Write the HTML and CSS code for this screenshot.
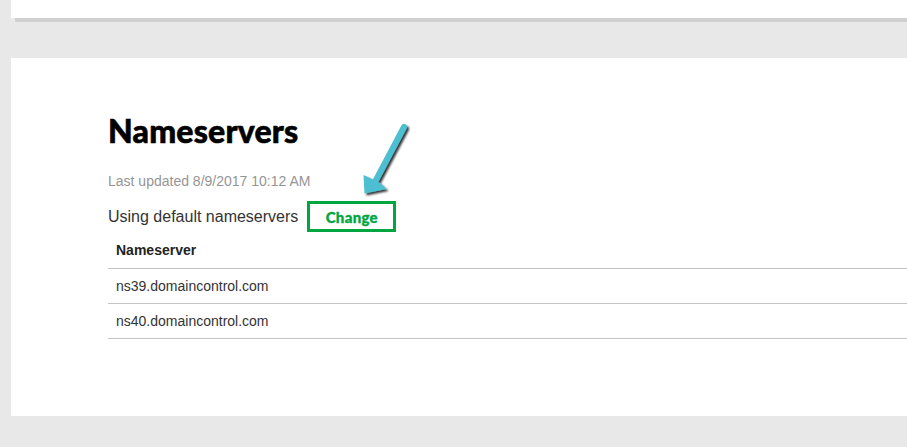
FILE: index.html
```html
<!DOCTYPE html>
<html>
<head>
<meta charset="utf-8">
<link rel="stylesheet" href="styles.css">
</head>
<body>
<div class="page">
  <div class="card card-top"></div>
  <div class="card card-main">
    <h1 class="title">Nameservers</h1>
    <p class="updated">Last updated 8/9/2017 10:12 AM</p>
    <div class="status-row">
      <span class="status">Using default nameservers</span>
      <button class="change-btn">Change</button>
    </div>
    <table class="ns-table">
      <thead>
        <tr><th>Nameserver</th></tr>
      </thead>
      <tbody>
        <tr><td>ns39.domaincontrol.com</td></tr>
        <tr><td>ns40.domaincontrol.com</td></tr>
      </tbody>
    </table>
  </div>
</div>
<svg class="arrow" width="60" height="90" viewBox="355 115 60 90" xmlns="http://www.w3.org/2000/svg">
  <defs>
    <filter id="sh" x="-50%" y="-50%" width="200%" height="200%">
      <feGaussianBlur in="SourceAlpha" stdDeviation="1.2"/>
      <feOffset dx="2" dy="2" result="b"/>
      <feComponentTransfer><feFuncA type="linear" slope="0.8"/></feComponentTransfer>
      <feMerge><feMergeNode/><feMergeNode in="SourceGraphic"/></feMerge>
    </filter>
  </defs>
  <g filter="url(#sh)" fill="#4dbfd3">
    <path d="M404 127 L376 180" stroke="#4dbfd3" stroke-width="6" stroke-linecap="round" fill="none"/>
    <path d="M364.5 193.5 L363.5 175 L370 178 L380 183 L386.5 189 Z"/>
  </g>
</svg>
</body>
</html>
```

FILE: styles.css
```css
html, body {
  margin: 0;
  padding: 0;
}
body {
  background: #e8e8e8;
  overflow: hidden;
  font-family: "Liberation Sans", Arial, sans-serif;
}
.page {
  display: flex;
  flex-direction: column;
  gap: 40px;
  padding-left: 11px;
  margin-right: -40px;
}
.card {
  background: #fff;
  box-shadow: 4px 4px 0 #d0d0d0;
}
.card-top {
  height: 18px;
}
.card-main {
  height: 358px;
  box-sizing: border-box;
  padding: 53px 0 0 97px;
  display: flex;
  flex-direction: column;
}
.title {
  margin: 0;
  font-family: "Lato", sans-serif;
  font-weight: 900;
  font-size: 32px;
  line-height: 40px;
  color: #000;
  letter-spacing: 0.2px;
  -webkit-text-stroke: 0.6px #000;
}
.updated {
  margin: 20px 0 0;
  font-size: 14px;
  line-height: 20px;
  color: #959595;
}
.status-row {
  display: flex;
  align-items: center;
  gap: 9px;
  margin-top: 10px;
}
.status {
  font-size: 16px;
  color: #333;
}
.change-btn {
  width: 89px;
  height: 31px;
  border: 3px solid #00a63f;
  background: #fff;
  color: #00a63f;
  font-family: "Lato", sans-serif;
  font-weight: 900;
  font-size: 15px;
  letter-spacing: 0.3px;
  padding: 0;
  box-sizing: border-box;
  -webkit-text-stroke: 0.3px #00a63f;
}
.ns-table {
  border-collapse: collapse;
  width: 100%;
}
.ns-table th {
  text-align: left;
  font-size: 14px;
  font-weight: bold;
  color: #222;
  height: 36px;
  padding: 0 0 0 8px;
  border-bottom: 1px solid #c4c4c4;
}
.ns-table td {
  font-size: 14px;
  color: #333;
  height: 34px;
  padding: 0 0 0 8px;
  border-bottom: 1px solid #c4c4c4;
}
.arrow {
  position: absolute;
  left: 355px;
  top: 115px;
}
```
